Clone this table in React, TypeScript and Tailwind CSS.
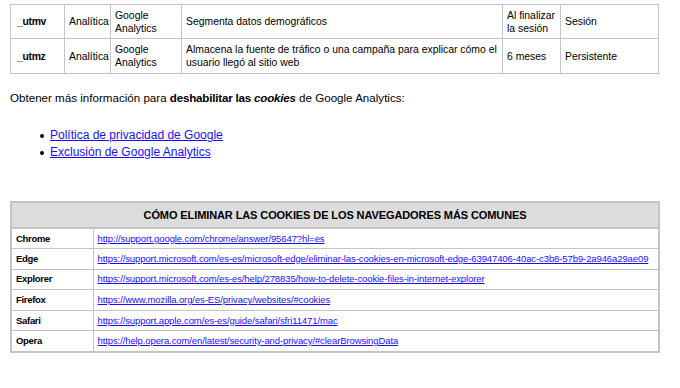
import React from 'react';

const cookies = [
  {
    name: '_utmv',
    type: 'Analítica',
    owner: ['Google', 'Analytics'],
    purpose: 'Segmenta datos demográficos',
    expiry: ['Al finalizar', 'la sesión'],
    kind: 'Sesión',
  },
  {
    name: '_utmz',
    type: 'Analítica',
    owner: ['Google', 'Analytics'],
    purpose: 'Almacena la fuente de tráfico o una campaña para explicar cómo el usuario llegó al sitio web',
    expiry: ['6 meses'],
    kind: 'Persistente',
  },
];

const browsers = [
  { name: 'Chrome', url: 'http://support.google.com/chrome/answer/95647?hl=es' },
  {
    name: 'Edge',
    url: 'https://support.microsoft.com/es-es/microsoft-edge/eliminar-las-cookies-en-microsoft-edge-63947406-40ac-c3b8-57b9-2a946a29ae09',
  },
  {
    name: 'Explorer',
    url: 'https://support.microsoft.com/es-es/help/278835/how-to-delete-cookie-files-in-internet-explorer',
  },
  { name: 'Firefox', url: 'https://www.mozilla.org/es-ES/privacy/websites/#cookies' },
  { name: 'Safari', url: 'https://support.apple.com/es-es/guide/safari/sfri11471/mac' },
  { name: 'Opera', url: 'https://help.opera.com/en/latest/security-and-privacy/#clearBrowsingData' },
];

const cell = 'border border-[#c4c4c4] px-[4px] py-0 align-middle';

export default function App() {
  return (
    <div className="w-[680px] h-[388px] bg-white text-black overflow-hidden font-['Liberation_Sans',Arial,sans-serif]">
      <div className="pl-[10px] pt-[4px]">
        {/* Cookie table */}
        <table className="table-fixed border-collapse w-[648px] text-[10.4px] leading-[13px]">
          <colgroup>
            <col className="w-[54px]" />
            <col className="w-[46px]" />
            <col className="w-[71px]" />
            <col className="w-[321px]" />
            <col className="w-[58px]" />
            <col className="w-[98px]" />
          </colgroup>
          <tbody>
            {cookies.map((c, i) => (
              <tr key={c.name} className={i === 0 ? 'h-[34px]' : 'h-[35px]'}>
                <td className={`${cell} font-bold pl-[6px] tracking-[-0.3px]`}>{c.name}</td>
                <td className={cell}>{c.type}</td>
                <td className={cell}>
                  {c.owner.map((l) => (
                    <div key={l}>{l}</div>
                  ))}
                </td>
                <td className={cell}>{c.purpose}</td>
                <td className={cell}>
                  {c.expiry.map((l) => (
                    <div key={l}>{l}</div>
                  ))}
                </td>
                <td className={cell}>{c.kind}</td>
              </tr>
            ))}
          </tbody>
        </table>

        <p className="mt-[16px] text-[11.6px] leading-[15px]">
          Obtener más información para <b className="tracking-[-0.2px]">deshabilitar las <i>cookies</i></b> de Google Analytics:
        </p>

        <ul className="mt-[22px] pl-[30px] text-[12px] leading-[17px]">
          <li className="flex items-center">
            <span className="w-[4px] h-[4px] rounded-full bg-black mr-[6px]" />
            <a href="#" className="text-[#1a0dff] underline">Política de privacidad de Google</a>
          </li>
          <li className="flex items-center">
            <span className="w-[4px] h-[4px] rounded-full bg-black mr-[6px]" />
            <a href="#" className="text-[#1a0dff] underline">Exclusión de Google Analytics</a>
          </li>
        </ul>

        {/* Browsers table */}
        <table className="mt-[40px] table-fixed border-collapse w-[648px] text-[9.5px] leading-[12px] border-2 border-[#c4c4c4]">
          <colgroup>
            <col className="w-[82px]" />
            <col className="w-[566px]" />
          </colgroup>
          <thead>
            <tr className="h-[26px] bg-[#dcdcdc]">
              <th colSpan={2} className="border-2 border-[#c4c4c4] text-[11px] font-bold text-center tracking-[-0.1px]">
                CÓMO ELIMINAR LAS COOKIES DE LOS NAVEGADORES MÁS COMUNES
              </th>
            </tr>
          </thead>
          <tbody>
            {browsers.map((b) => (
              <tr key={b.name} className="h-[20.6px]">
                <td className={`${cell} font-bold tracking-[-0.3px]`}>{b.name}</td>
                <td className={`${cell} whitespace-nowrap overflow-hidden`}>
                  <a href="#" className="text-[#1a0dff] underline tracking-[-0.1px]">{b.url}</a>
                </td>
              </tr>
            ))}
          </tbody>
        </table>
      </div>
    </div>
  );
}
